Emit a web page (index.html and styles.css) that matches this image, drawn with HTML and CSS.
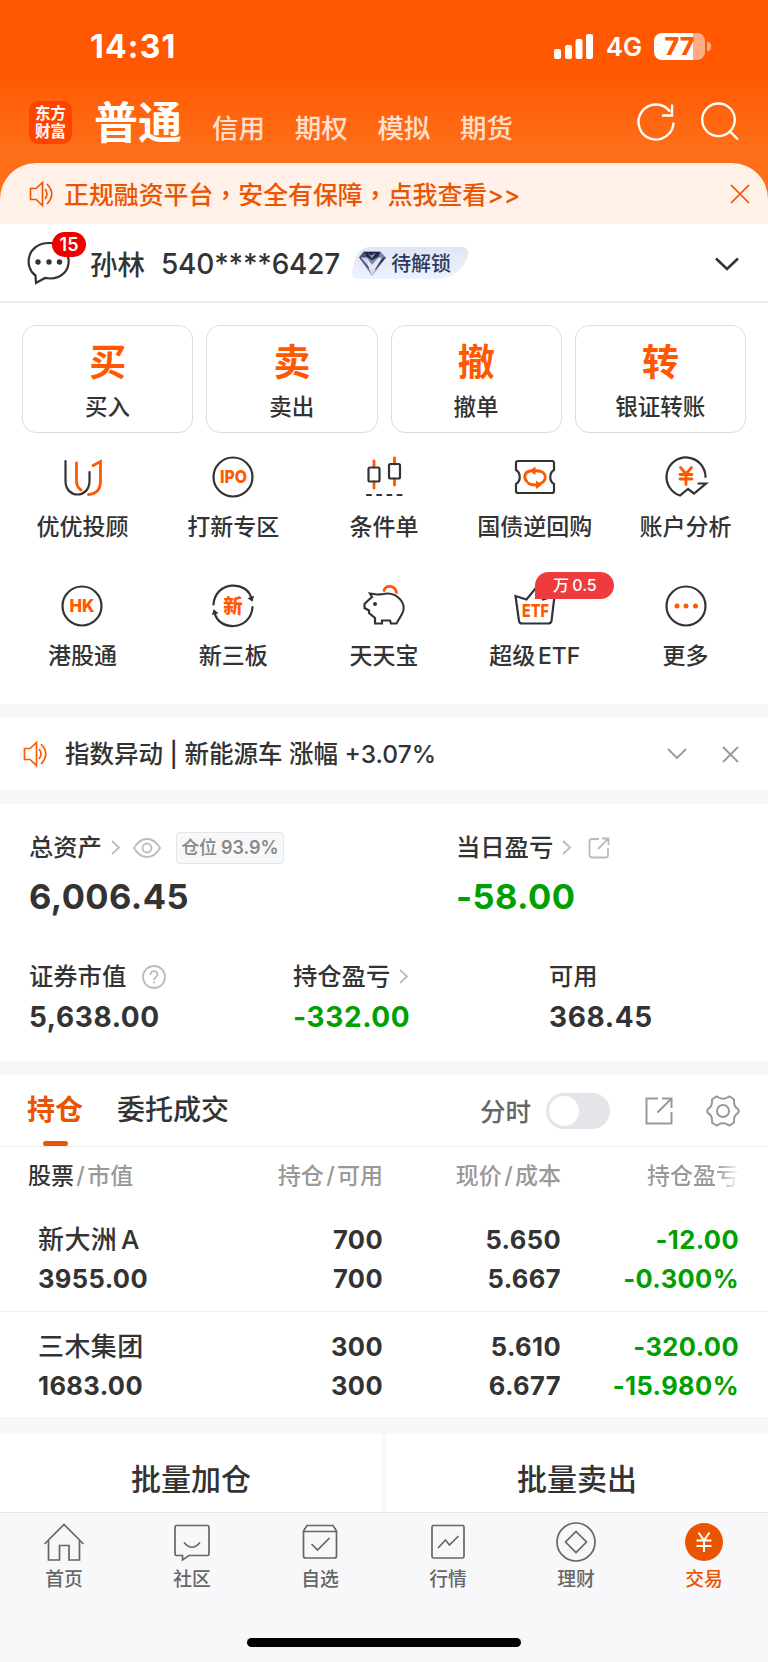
FILE: index.html
```html
<!DOCTYPE html>
<html lang="zh-CN">
<head>
<meta charset="UTF-8">
<title>交易</title>
<link rel="stylesheet" href="styles.css">
</head>
<body>

<!-- 顶部 -->
<div class="top">
	<div class="status">
		<span class="time">14:31</span>
		<div class="status-right">
			<svg class="signal" width="39" height="25" fill="#fff">
				<rect x="0" y="15" width="7" height="10" rx="2"/>
				<rect x="11" y="11" width="7" height="14" rx="2"/>
				<rect x="21.500" y="5" width="7" height="20" rx="2"/>
				<rect x="32" y="0" width="7" height="25" rx="2"/>
			</svg>
			<span class="net">4G</span>
			<div class="battery">77</div>
			<div class="battery-cap"></div>
		</div>
	</div>
	<div class="nav">
		<div class="logo">东方<br>财富</div>
		<span class="nav-on">普通</span>
		<span class="nav-item">信用</span>
		<span class="nav-item">期权</span>
		<span class="nav-item">模拟</span>
		<span class="nav-item">期货</span>
		<div class="nav-icons">
			<svg width="40" height="40" fill="none" stroke="#fff" stroke-width="2.400">
				<path d="M37.500 20.500A17.500 17.500 0 1 1 34 9.500"/>
				<path d="M36 2.500V13.500H26"/>
			</svg>
			<svg width="40" height="40" fill="none" stroke="#fff" stroke-width="2.400">
				<circle cx="18.500" cy="17.800" r="16.300"/>
				<path d="M30 29.500L38 37.500"/>
			</svg>
		</div>
	</div>
</div>

<div class="banner-wrap">
	<div class="banner">
		<svg class="speaker" width="25" height="26" viewBox="0 0 25 26" fill="none" stroke="#ea5504" stroke-width="1.600">
			<path d="M1.500 7.500H7L13.500 1.500V24.500L7 18.500H1.500Z"/>
			<path d="M16 8Q20 13 16 18M18 3Q27.500 13 18 23"/>
		</svg>
		<span class="banner-text">正规融资平台<i lang="zh-Hant">，</i>安全有保障<i lang="zh-Hant">，</i>点我查看&gt;&gt;</span>
		<svg class="right" width="20" height="20" fill="none" stroke="#ea5504" stroke-width="1.700"><path d="M1 1L19 19M19 1L1 19"/></svg>
	</div>
</div>

<!-- 账户 -->
<div class="user">
	<div class="msg">
		<svg width="46" height="46" fill="none" stroke="#333" stroke-width="2.200">
			<path d="M9.500 35.500C-2 28 0 3 23 3C48 3 50 38 24 38.500L19 38L10 43Z"/>
			<g fill="#333" stroke="none"><circle cx="12" cy="22" r="2.700"/><circle cx="23" cy="22" r="2.700"/><circle cx="33.500" cy="22" r="2.700"/></g>
		</svg>
		<span class="badge">15</span>
	</div>
	<span class="name">孙林</span>
	<span class="account">540****6427</span>
	<div class="lock">
		<svg width="28" height="28" viewBox="0 0 30 30">
			<path d="M5 3H23L29 9L14 29L0 9Z" fill="#7c86ad"/>
			<path d="M5 3H23L21 8L14 12L8 8Z" fill="#1c2b49"/>
			<path d="M9 4L13 7L18 4L14 10Z" fill="#8fa3c8"/>
			<path d="M0 9L5 3L8 8L13 25Z" fill="#4a5275"/>
			<path d="M2 9L8 9L13 22Z" fill="#cdd3ea"/>
			<path d="M29 9L21 9L15 25Z" fill="#3a3d70"/>
			<path d="M8 9L14 17L21 9H25L17 22L14 24L11 22Z" fill="#e4e6f0"/>
			<path d="M11 22L18 22L14 29Z" fill="#d3d6e5"/>
		</svg>
		<span>待解锁</span>
	</div>
	<svg class="right down" width="24" height="15" fill="none" stroke="#333" stroke-width="2.600"><path d="M1 1.500L12 12L23 1.500"/></svg>
</div>

<div class="trade">
	<div class="card"><b>买</b><span>买入</span></div>
	<div class="card"><b>卖</b><span>卖出</span></div>
	<div class="card"><b>撤</b><span>撤单</span></div>
	<div class="card"><b>转</b><span>银证转账</span></div>
</div>

<!-- 功能入口 -->
<div class="menu">
	<div class="item">
		<svg class="ico" viewBox="0 0 42 42">
			<path d="M4.500 5V25C4.500 43 28.500 43 28.500 25V16"/>
			<path class="o" d="M15.500 7V25Q15.500 31 20 34M32 9.500L39.500 5.500V25Q39.500 37.500 27.500 38.500"/>
		</svg>
		<span>优优投顾</span>
	</div>
	<div class="item">
		<svg class="ico" viewBox="0 0 42 42"><circle cx="21" cy="21" r="19.500"/><text x="21.500" y="27.300" font-size="17.500" textLength="27" lengthAdjust="spacingAndGlyphs">IPO</text></svg>
		<span>打新专区</span>
	</div>
	<div class="item">
		<svg class="ico" viewBox="0 0 42 42">
			<path class="o" d="M11 5V11M11 26V32M31.500 2V8M31.500 23V29"/>
			<rect x="5.500" y="11.500" width="11" height="14" rx="1.500"/><rect x="26" y="8" width="11" height="14.500" rx="1.500"/>
			<path d="M4 39H40" stroke-dasharray="4 6.200"/>
		</svg>
		<span>条件单</span>
	</div>
	<div class="item">
		<svg class="ico" viewBox="0 0 42 42">
			<path d="M4 5H38Q40 5 40 7V14C35 17 35 25 40 28V35Q40 37 38 37H4Q2 37 2 35V28C7 25 7 17 2 14V7Q2 5 4 5Z"/>
			<path class="o" d="M13 25.500C9 22 10.500 16 16 15M29 16.500C33 20 31.500 26 26 27.500M14.500 27.500Q17 29 22 29M20 14.800Q25 14.500 27.500 15.800"/>
			<path class="f" d="M21.500 10.500V19L15 14.800ZM22 24.500V33L28 29Z"/>
		</svg>
		<span>国债逆回购</span>
	</div>
	<div class="item">
		<svg class="ico" viewBox="0 0 42 42">
			<path d="M40.500 21A19.500 19.500 0 1 0 15 39.500L23 33L29 37.500L41 27.500H33.500"/>
			<path class="o" d="M15.500 11.500L21 18L26.500 11.500M21 18V28.500M15 18.500H27M15 23H27"/>
		</svg>
		<span>账户分析</span>
	</div>
	<div class="item">
		<svg class="ico" viewBox="0 0 42 42"><circle cx="21" cy="21" r="19.500"/><text x="21" y="27.300" font-size="17.500" textLength="25" lengthAdjust="spacingAndGlyphs">HK</text></svg>
		<span>港股通</span>
	</div>
	<div class="item">
		<svg class="ico" viewBox="0 0 42 42">
			<path d="M1.500 19.500C3 -4.500 36 -5 39.500 14M40.500 22C39 46 6 47 2.500 27"/>
			<path d="M37 13.500L40 15.500L41 12ZM1 29L2 25.500L5 28Z" fill="#333" stroke-width="1.500"/>
			<text x="21" y="28" font-size="19.500">新</text>
		</svg>
		<span>新三板</span>
	</div>
	<div class="item">
		<svg class="ico" viewBox="0 0 42 42">
			<path class="o" d="M21 5.500C23 -.5 32 0 33.500 7.500"/>
			<path d="M7 8.500L14 9.500Q17 9.500 20 9C34 6 45 19 39 29L33.500 38.500H28L27 35.500H19V38.500H12V33L6 28V25.500L1.500 23V19L4.500 16L9 12Z"/>
			<circle cx="12" cy="19" r="2" fill="#333" stroke="none"/>
		</svg>
		<span>天天宝</span>
	</div>
	<div class="item">
		<svg class="ico" viewBox="0 0 42 42">
			<path d="M5 36L1.500 11L12.500 14.500L21 4L29 14.500L40.500 11L37.500 36Q37 38.500 34 38.500H8Q5.500 38.500 5 36Z"/>
			<text x="21.500" y="31.500" font-size="18" textLength="27" lengthAdjust="spacingAndGlyphs">ETF</text>
		</svg>
		<em class="flag">万 0.5</em>
		<span>超级 ETF</span>
	</div>
	<div class="item">
		<svg class="ico" viewBox="0 0 42 42"><circle cx="21" cy="21" r="19.500"/><g class="f"><circle cx="12" cy="21" r="2.500"/><circle cx="21" cy="21" r="2.500"/><circle cx="30.500" cy="21" r="2.500"/></g></svg>
		<span>更多</span>
	</div>
</div>

<div class="notice">
	<svg class="speaker" width="25" height="26" viewBox="0 0 25 26" fill="none" stroke="#ff5a00" stroke-width="1.700">
		<path d="M1.500 7.500H7L13.500 1.500V24.500L7 18.500H1.500Z"/>
		<path d="M16 8Q20 13 16 18M18 3Q27.500 13 18 23"/>
	</svg>
	<span class="notice-text">指数异动 | 新能源车 涨幅 +3.07%</span>
	<svg class="right" width="20" height="12" fill="none" stroke="#999" stroke-width="1.800"><path d="M1 1L10 10L19 1"/></svg>
	<svg class="notice-x" width="17" height="17" fill="none" stroke="#999" stroke-width="1.800"><path d="M1 1L16 16M16 1L1 16"/></svg>
</div>

<!-- 资产 -->
<div class="asset">
	<div class="row row1">
		<div class="cell">
			<div class="label"><span>总资产</span>
				<svg class="arr" width="9" height="15"><path d="M1 1L8 7.500L1 14"/></svg>
				<svg class="eye" width="28" height="20"><path d="M1 10C8 -2 20 -2 27 10C20 22 8 22 1 10Z"/><circle cx="14" cy="10" r="4.500"/></svg>
				<div class="pos">仓位 <b>93.9%</b></div>
			</div>
			<div class="num big">6,006.45</div>
		</div>
		<div class="cell">
			<div class="label"><span>当日盈亏</span>
				<svg class="arr" width="9" height="15"><path d="M1 1L8 7.500L1 14"/></svg>
				<svg class="out" width="22" height="22"><path d="M11 2H4Q1.500 2 1.500 4.500V18Q1.500 20.500 4 20.500H17.500Q20 20.500 20 18V11M14 1.500H20.500V8M20 2L10 12"/></svg>
			</div>
			<div class="num big green">-58.00</div>
		</div>
	</div>
	<div class="row row2">
		<div class="cell">
			<div class="label"><span>证券市值</span>
				<svg class="help" width="24" height="24"><circle cx="12" cy="12" r="11"/><path d="M8.500 10C8.500 5 15.500 5 15.500 9.500C15.500 12 12 12 12 15M12 16.500V18.500"/></svg>
			</div>
			<div class="num">5,638.00</div>
		</div>
		<div class="cell">
			<div class="label"><span>持仓盈亏</span>
				<svg class="arr" width="9" height="15"><path d="M1 1L8 7.500L1 14"/></svg>
			</div>
			<div class="num green">-332.00</div>
		</div>
		<div class="cell">
			<div class="label"><span>可用</span></div>
			<div class="num">368.45</div>
		</div>
	</div>
</div>

<!-- 持仓列表 -->
<div class="tabs">
	<span class="tab on">持仓</span>
	<span class="tab">委托成交</span>
	<span class="minute">分时</span>
	<div class="switch"></div>
	<svg class="tab-share" width="28" height="28"><path d="M13 1.500H1.500V26.500H26.500V15M17 1.500H26.500V11M26 2L12.500 15.500"/></svg>
	<svg class="tab-gear" width="34" height="34"><path d="M12.500 3.500Q17 6 21.500 3.500Q23 2 24.500 3L28 5.500C27.500 11 29 13.500 32 15Q33.500 17 32 19C29 20.500 27.500 23 28 28.500L24.500 31Q23 32 21.500 30.500Q17 28 12.500 30.500Q11 32 9.500 31L6 28.500C6.500 23 5 20.500 2 19Q.5 17 2 15C5 13.500 6.500 11 6 5.500L9.500 3Q11 2 12.500 3.500Z"/><circle cx="17" cy="17" r="6"/></svg>
</div>
<div class="list">
	<div class="thead">
		<span><b>股票</b> / 市值</span>
		<span>持仓 / 可用</span>
		<span>现价 / 成本</span>
		<span class="fade">持仓盈亏</span>
	</div>
	<div class="stock">
		<div><span class="sname">新大洲 A</span><br>3955.00</div>
		<div>700<br>700</div>
		<div>5.650<br>5.667</div>
		<div class="green">-12.00<br>-0.300%</div>
	</div>
	<div class="stock">
		<div><span class="sname">三木集团</span><br>1683.00</div>
		<div>300<br>300</div>
		<div>5.610<br>6.677</div>
		<div class="green">-320.00<br>-15.980%</div>
	</div>
</div>

<div class="batch">
	<div>批量加仓</div>
	<div>批量卖出</div>
</div>

<!-- 底部导航 -->
<div class="foot">
	<div class="foot-item">
		<svg viewBox="0 0 40 40"><path d="M.5 22L20 2.500L39.500 22M4.500 18V38H15.500V23.500H25V38H35.500V18"/></svg>
		首页
	</div>
	<div class="foot-item">
		<svg viewBox="0 0 40 40"><path d="M4.500 3.500H35.500Q37 3.500 37 5V32Q37 33.500 35.500 33.500H17L10.500 38V33.500H4.500Q3 33.500 3 32V5Q3 3.500 4.500 3.500ZM12 20.500Q20 30 28 20.500"/></svg>
		社区
	</div>
	<div class="foot-item">
		<svg viewBox="0 0 40 40"><path d="M3.500 9L7 3.500H33L36.500 9V34Q36.500 36 34.500 36H5.500Q3.500 36 3.500 34ZM3.500 9.500H36.500M11.500 22L17.500 28L29.500 16"/></svg>
		自选
	</div>
	<div class="foot-item">
		<svg viewBox="0 0 40 40"><rect x="4" y="3.500" width="32" height="32.500" rx="1.500"/><path d="M10 26L17.500 18L21.500 23L30.500 14"/></svg>
		行情
	</div>
	<div class="foot-item">
		<svg viewBox="0 0 40 40"><circle cx="20" cy="20" r="19"/><path d="M20 9.500L30.500 20L20 30.500L9.500 20Z"/></svg>
		理财
	</div>
	<div class="foot-item cur">
		<svg viewBox="0 0 40 40"><circle cx="20" cy="20" r="19" fill="#ea5504" stroke="none"/><path d="M14.500 10.500L20 18.500L25.500 10.500M20 18.500V30M12.500 18.500H27.500M12.500 24H27.500" stroke="#fff" stroke-width="2"/></svg>
		交易
	</div>
</div>
<div class="home-bar"></div>

</body>
</html>
```
FILE: styles.css
```css
* {box-sizing: border-box;}
body {margin: 0; width: 768px; height: 1662px; overflow: hidden; background: #f8f8fb; color: #333; font-family: Inter, "Noto Sans CJK SC", sans-serif; font-weight: 500; white-space: nowrap;}
svg {display: block; flex: none; overflow: visible;}
i, em {font-style: normal;}
.right {margin-left: auto;}
.green {color: #00a000;}

/* 顶部 */
.top {height: 163px; background: linear-gradient(#ff5800 0, #ff5800 70px, #ff6e19 150px); color: #fff;}
.status {display: flex; height: 92px; padding: 0 57px 0 90px; align-items: center; justify-content: space-between;}
.time {font-size: 32px; font-weight: 700; letter-spacing: 1.2px;}
.status-right {display: flex; align-items: center;}
.net {margin: 1px 12px 0 13px; font-size: 25.500px; font-weight: 600;}
.battery {width: 51px; height: 27px; border-radius: 8px; background: linear-gradient(90deg, #fff 77%, #ffac85 77%); color: #ff5800; font-size: 25px; font-weight: 800; line-height: 27px; text-align: center;}
.battery-cap {width: 4px; height: 9px; margin-left: 2px; border-radius: 0 4px 4px 0; background: #ffac85;}
.nav {display: flex; height: 71px; padding: 0 28px 0 29px;}
.logo {width: 43px; height: 43px; margin-top: 9px; padding-top: 4px; border-radius: 9px; background: #ff4400; font-size: 15.500px; font-weight: 700; line-height: 18px; text-align: center;}
.nav-on {margin: 1px 16px 0 22px; font-size: 44px; font-weight: 700; line-height: 60px;}
.nav-item {width: 82.7px; padding-left: 14px; color: #ffe0d0; font-size: 26.500px; line-height: 73px;}
.nav-icons {display: flex; gap: 24px; margin: 10px 0 0 auto;}
.banner-wrap {height: 61px; background: #ff6e19;}
.banner {display: flex; height: 61px; padding: 0 18px 0 29px; align-items: center; border-radius: 36px 36px 0 0; background: #fff0e8; color: #ea5504;}
.banner-text {margin: -2px 0 0 10px; font-size: 24.900px;}
.banner-text i {font-family: "Noto Sans CJK TC", sans-serif;}

/* 账户 */
.user {display: flex; height: 79px; padding: 0 29px 0 26px; align-items: center; border-bottom: 2px solid #eee; background: #fff;}
.msg {position: relative; width: 46px; height: 46px;}
.badge {position: absolute; left: 26px; top: -8px; width: 34px; height: 25px; border-radius: 13px; background: #ee0000; color: #fff; font-size: 18px; font-weight: 600; line-height: 25px; text-align: center;}
.name {margin-left: 18px; font-size: 27.500px;}
.account {margin: 2px 0 0 16px; font-size: 28px; letter-spacing: -0.2px;}
.lock {display: flex; position: relative; z-index: 0; width: 112px; height: 32px; margin-left: 14px; padding-left: 5px; align-items: center; gap: 4px; color: #2d3a5c; font-size: 20px;}
.lock::before {content: ""; position: absolute; z-index: -1; inset: 0; border-radius: 12px 8px 24px 8px; background: linear-gradient(#e1e6f5, #eef1ff); transform: skewX(-14deg);}
.down {margin-top: 3px;}
.trade {display: flex; padding: 22px 22px 0; gap: 13px; background: #fff;}
.card {display: flex; flex: 1; height: 108px; padding-top: 11px; flex-direction: column; align-items: center; border: 1.5px solid #ddd; border-radius: 14px; font-size: 22.500px; line-height: 32px;}
.card b {color: #ff5800; font-size: 37px; line-height: 52px;}
.card span {margin-top: 2px;}

/* 功能入口 */
.menu {display: grid; height: 271px; padding: 23px 7px 0; grid-template-columns: repeat(5, 1fr); grid-template-rows: 129px 129px; background: #fff;}
.item {display: flex; position: relative; flex-direction: column; align-items: center; font-size: 23px; word-spacing: -3.500px;}
.item span {margin-top: 12px; line-height: 34px;}
.ico {width: 42px; height: 42px; fill: none; stroke: #333; stroke-width: 2.200; stroke-linecap: round;}
.ico .o {stroke: #ff5800; stroke-width: 2.800;}
.ico .f {fill: #ff5800; stroke: none;}
.ico text {fill: #ff5800; stroke: none; font-weight: 800; text-anchor: middle;}
.flag {position: absolute; left: 76px; top: -13px; width: 79px; height: 27px; border-radius: 14px 14px 14px 0; background: #ed3b3e; color: #fff; font-size: 16px; line-height: 27px; text-align: center; word-spacing: -1px;}
.notice {display: flex; height: 100px; padding: 0 29px 0 23px; align-items: center; border: solid #f6f7f9; border-width: 14px 0; background: #fff;}
.notice-text {margin: -3px 0 0 17px; font-size: 24.500px;}
.notice-x {margin-left: 35px;}

/* 资产 */
.asset {height: 257px; background: #fff;}
.row {display: grid;}
.row1 {height: 129px; padding: 24px 0 0 29px; grid-template-columns: 427px 1fr;}
.row2 {padding: 24px 0 0 29px; grid-template-columns: 264px 256px 1fr;}
.label {display: flex; height: 40px; align-items: center; font-size: 24.300px;}
.label span {margin-top: -5px;}
.label svg {fill: none; stroke: #bbb; stroke-width: 1.800;}
.label .arr {margin: -1px 0 0 9px;}
.eye {margin-left: 13px;}
.out {margin-left: 17px;}
.help {margin: -1px 0 0 16px;}
.pos {width: 108px; height: 32px; margin-left: 15px; border: 1.500px solid #e4e5e8; border-radius: 4px; background: #f7f8fa; color: #888; font-size: 18px; line-height: 29px; text-align: center; word-spacing: -1px;}
.pos b {font-weight: 600;}
.num {font-size: 28px; font-weight: 700; letter-spacing: 0.6px; line-height: 40px;}
.num.big {font-size: 34.500px; letter-spacing: 0.4px; line-height: 58px;}

/* 持仓列表 */
.tabs {display: flex; height: 86px; padding: 0 28px; align-items: center; border-top: 14px solid #f6f7f9; border-bottom: 1px solid #eee; background: #fff;}
.tab {height: 71px; margin: 0 35px 0 -1px; font-size: 28px; line-height: 71px;}
.tab.on {position: relative; color: #ea5504; font-weight: 700;}
.tab.on::after {content: ""; position: absolute; left: 16px; bottom: 0; width: 25px; height: 5px; border-radius: 3px; background: #ea5504;}
.minute {margin: -2px 0 0 auto; color: #666; font-size: 25.500px;}
.switch {width: 64px; height: 36px; margin: 0 35px 0 15px; padding: 3px; border-radius: 18px; background: #e4e5e8;}
.switch::before {content: ""; display: block; width: 30px; height: 30px; border-radius: 50%; background: #fff;}
.tabs svg {fill: none; stroke: #999; stroke-width: 2;}
.tab-share {margin-right: 33px;}
.list {background: #fff;}
.thead, .stock {display: grid; padding: 0 29px 0 28px; grid-template-columns: 178px 177px 178px 178px; text-align: right;}
.thead {height: 58px; color: #999; font-size: 23px; line-height: 59px; word-spacing: -3.800px;}
.thead b {color: #333; font-weight: 500;}
.thead span:first-child, .stock div:first-child {text-align: left;}
.fade {overflow: hidden; background: linear-gradient(90deg, #999 88%, #fff); background-clip: text; color: transparent;}
.stock {height: 107px; padding-top: 15px; border-bottom: 1px solid #eee; font-size: 25.500px; font-weight: 700; letter-spacing: 0.4px; line-height: 39px;}
.stock div:first-child {padding-left: 10px;}
.sname {font-size: 26px; font-weight: 500; word-spacing: -3.500px;}

.batch {display: flex; height: 93px; padding-top: 15px; gap: 4px;}
.batch div {flex: 1; background: #fff; font-size: 30px; line-height: 91px; text-align: center;}

/* 底部导航 */
.foot {display: flex; height: 126px; padding-top: 9px; border-top: 1.500px solid #e6e6e8; color: #666;}
.foot-item {display: flex; flex: 1; flex-direction: column; align-items: center; font-size: 18.800px; line-height: 32px;}
.foot-item svg {width: 40px; height: 40px; margin-bottom: 2px; fill: none; stroke: #666; stroke-width: 1.700;}
.cur {color: #ea5504;}
.home-bar {width: 274px; height: 9px; margin: 0 auto; border-radius: 5px; background: #000;}
```
